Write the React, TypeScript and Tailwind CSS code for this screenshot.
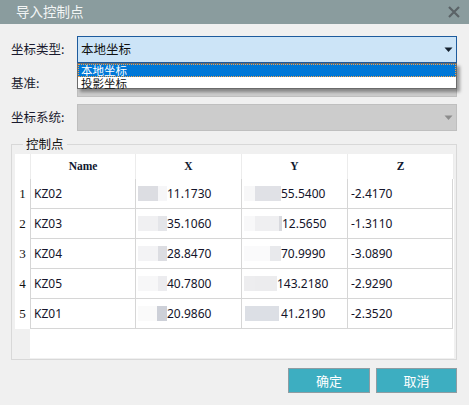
import React from "react";

type Blur = { w: number; c: string };
type Row = { name: string; x: string; xb: Blur[]; y: string; yb: Blur[]; z: string };

const rows: Row[] = [
	{
		name: "KZ02",
		x: "11.1730",
		xb: [{ w: 20, c: "#dcdde2" }, { w: 9, c: "#f6f6f8" }],
		y: "55.5400",
		yb: [{ w: 11, c: "#f7f7f8" }, { w: 26, c: "#e0e1e6" }],
		z: "-2.4170",
	},
	{
		name: "KZ03",
		x: "35.1060",
		xb: [{ w: 20, c: "#f0f0f2" }, { w: 9, c: "#e4e5e9" }],
		y: "12.5650",
		yb: [{ w: 11, c: "#f8f8f9" }, { w: 24, c: "#efeff1" }, { w: 3, c: "#d8d9de" }],
		z: "-1.3110",
	},
	{
		name: "KZ04",
		x: "28.8470",
		xb: [{ w: 20, c: "#f3f3f5" }, { w: 9, c: "#dcdde2" }],
		y: "70.9990",
		yb: [{ w: 26, c: "#fafafb" }, { w: 11, c: "#e8e9ec" }],
		z: "-3.0890",
	},
	{
		name: "KZ05",
		x: "40.7800",
		xb: [{ w: 20, c: "#f7f7f8" }, { w: 9, c: "#ececef" }],
		y: "143.2180",
		yb: [{ w: 11, c: "#ededef" }, { w: 22, c: "#ececee" }],
		z: "-2.9290",
	},
	{
		name: "KZ01",
		x: "20.9860",
		xb: [{ w: 19, c: "#fafafa" }, { w: 10, c: "#cdd0d8" }],
		y: "41.2190",
		yb: [{ w: 1, c: "#ffffff" }, { w: 34, c: "#dcdfe5" }, { w: 2, c: "#ffffff" }],
		z: "-2.3520",
	},
];

const cjk = "font-['Noto_Sans_CJK_SC',sans-serif]";
const data = "font-['Noto_Sans',sans-serif] text-[12px] text-[#14142a]";

function Blurred({ blocks, text }: { blocks: Blur[]; text: string }) {
	return (
		<div className={`flex items-center pl-[2px] h-full ${data}`}>
			{blocks.map((b, i) => (
				<span key={i} className="h-[15px] shrink-0" style={{ width: b.w, background: b.c }} />
			))}
			<span>{text}</span>
		</div>
	);
}

function Arrow({ color }: { color: string }) {
	return (
		<svg width="9" height="6" viewBox="0 0 9 6">
			<path d="M0.5 0.5 L8.5 0.5 L4.5 5 Z" fill={color} />
		</svg>
	);
}

export default function App() {
	return (
		<div className="w-[469px] h-[405px] bg-[#f0f0f0] relative overflow-hidden">
			<div className="h-[24px] bg-[#8a9c9e] flex items-center justify-between pl-[16px] pr-[9px]">
				<span className={`${cjk} text-[13.5px] text-[#f2f5f5] leading-none`}>导入控制点</span>
				<svg width="12" height="12" viewBox="0 0 12 12">
					<path d="M1 1 L11 11 M11 1 L1 11" stroke="#5b6367" strokeWidth="2.2" />
				</svg>
			</div>

			<div className="pt-[12px] pl-[11px] pr-[12px]">
				<div className="flex flex-col gap-[7px]">
					<div className="flex items-center">
						<span className={`w-[66px] ${cjk} text-[12.5px] text-[#1a1a2e]`}>坐标类型:</span>
						<div className="flex-1 h-[27px] border border-[#1d5b9d] bg-[#cce4f7] flex items-center justify-between pl-[3px] pr-[3px]">
							<span className={`${cjk} text-[12.5px] text-[#111]`}>本地坐标</span>
							<Arrow color="#14202e" />
						</div>
					</div>
					<div className="flex items-center">
						<span className={`w-[66px] ${cjk} text-[12.5px] text-[#1a1a2e]`}>基准:</span>
						<div className="flex-1 h-[27px] border border-[#bfbfbf] bg-[#cccccc]" />
					</div>
					<div className="flex items-center">
						<span className={`w-[66px] ${cjk} text-[12.5px] text-[#1a1a2e]`}>坐标系统:</span>
						<div className="flex-1 h-[27px] border border-[#bfbfbf] bg-[#cccccc] flex items-center justify-end pr-[3px]">
							<Arrow color="#8c8c8c" />
						</div>
					</div>
				</div>

				<fieldset className="mt-[5px] border border-[#d8d8d8] h-[224px] pt-[2px] pl-[3px] pr-[2px]">
					<legend className={`ml-[8px] px-[3px] ${cjk} text-[12.5px] leading-[16px] text-[#111]`}>控制点</legend>
					<div className="h-[204px] flex flex-col">
						<div className="grid grid-cols-[15px_105px_106px_106px_106px_1px] h-[25px] bg-white">
							<div />
							{["Name", "X", "Y", "Z"].map((h) => (
								<div
									key={h}
									className="border-l border-[#ececec] flex items-center justify-center font-['Liberation_Serif',serif] font-bold text-[11.5px] text-[#101830]"
								>
									{h}
								</div>
							))}
							<div className="border-l border-[#ececec]" />
						</div>
						{rows.map((r, i) => (
							<div key={r.name} className="grid grid-cols-[15px_105px_106px_106px_106px_1px] h-[30px]">
								<div className="bg-white flex items-center justify-center font-['Liberation_Serif',serif] text-[13px] text-[#111]">
									{i + 1}
								</div>
								<div className={`bg-white border-l border-b border-[#d6d6d6] flex items-center pl-[3px] ${data}`}>{r.name}</div>
								<div className="bg-white border-l border-b border-[#d6d6d6]">
									<Blurred blocks={r.xb} text={r.x} />
								</div>
								<div className="bg-white border-l border-b border-[#d6d6d6]">
									<Blurred blocks={r.yb} text={r.y} />
								</div>
								<div className={`bg-white border-l border-r border-b border-[#d6d6d6] flex items-center pl-[3px] ${data}`}>{r.z}</div>
								<div className="bg-white" />
							</div>
						))}
						<div className="flex-1 flex">
							<div className="w-[15px]" />
							<div className="flex-1 bg-white" />
						</div>
					</div>
				</fieldset>

				<div className="mt-[8px] flex justify-end gap-[6px]">
					<button className={`w-[82px] h-[25px] bg-[#3daec1] border border-[#8f9ca2] ${cjk} text-[13px] text-white`}>确定</button>
					<button className={`w-[81px] h-[25px] bg-[#3daec1] border border-[#8f9ca2] ${cjk} text-[13px] text-white`}>取消</button>
				</div>
			</div>

			<div className="absolute left-[77px] top-[63px] w-[380px] h-[26px] border border-[#6b6b6b] bg-white shadow-[3px_3px_3px_rgba(0,0,0,0.35)]">
				<div className={`h-[13px] bg-[#0078d7] outline outline-1 outline-dotted outline-[#f0a04a] -outline-offset-1 flex items-center pl-[3px] ${cjk} text-[11.5px] leading-[11px] text-white`}>
					本地坐标
				</div>
				<div className={`h-[11px] flex items-center pl-[3px] ${cjk} text-[11.5px] leading-[10px] text-[#111]`}>投影坐标</div>
			</div>
		</div>
	);
}
